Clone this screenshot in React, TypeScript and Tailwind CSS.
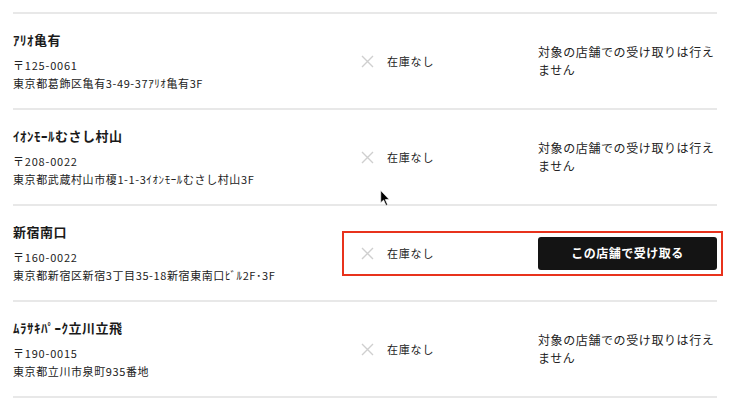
import React from "react";

type Store = {
  name: string;
  zip: string;
  address: string;
  canPickup: boolean;
};

const stores: Store[] = [
  { name: "ｱﾘｵ亀有", zip: "〒125-0061", address: "東京都葛飾区亀有3-49-37ｱﾘｵ亀有3F", canPickup: false },
  { name: "ｲｵﾝﾓｰﾙむさし村山", zip: "〒208-0022", address: "東京都武蔵村山市榎1-1-3ｲｵﾝﾓｰﾙむさし村山3F", canPickup: false },
  { name: "新宿南口", zip: "〒160-0022", address: "東京都新宿区新宿3丁目35-18新宿東南口ﾋﾞﾙ2F･3F", canPickup: true },
  { name: "ﾑﾗｻｷﾊﾟｰｸ立川立飛", zip: "〒190-0015", address: "東京都立川市泉町935番地", canPickup: false },
];

const font = { fontFamily: '"Noto Sans CJK JP", "Noto Sans", sans-serif' };

function Cross() {
  return (
    <svg width="13" height="13" viewBox="0 0 13 13" className="shrink-0">
      <path d="M1 1 L12 12 M12 1 L1 12" stroke="#cfcfcf" strokeWidth="1.4" />
    </svg>
  );
}

function StoreRow({ store }: { store: Store }) {
  return (
    <div className="relative flex items-center border-t-2 border-[#e8e8e8] h-[96px]">
      <div className="flex-1 flex flex-col pt-[14px] pb-[15px]">
        <p className="text-[13px] leading-[20px] font-bold text-[#1a1a1a] tracking-[0.5px]">{store.name}</p>
        <p className="mt-[6px] text-[11px] leading-[18px] text-[#222] tracking-[0.8px]">{store.zip}</p>
        <p className="text-[11px] leading-[18px] text-[#222] tracking-[0.6px]">{store.address}</p>
      </div>
      <div className="w-[196px] flex items-center pl-[19px] gap-[13px]">
        <Cross />
        <span className="text-[11px] text-[#222] tracking-[0.8px]">在庫なし</span>
      </div>
      <div className="w-[179px]">
        {store.canPickup ? (
          <button className="w-full h-[33px] rounded-[3px] bg-[#141414] text-white text-[12px] font-bold tracking-[0.5px]">
            この店舗で受け取る
          </button>
        ) : (
          <p className="text-[12px] leading-[18px] text-[#222] tracking-[0.6px]">
            対象の店舗での受け取りは行えません
          </p>
        )}
      </div>
      {store.canPickup && (
        <div className="absolute left-[329px] right-[-6px] top-[25px] h-[45px] border-2 border-[#e8321c] pointer-events-none" />
      )}
    </div>
  );
}

export default function App() {
  return (
    <div className="relative w-[730px] h-[410px] bg-white overflow-hidden" style={font}>
      <div className="pl-[13px] pr-[13px] pt-[12px]">
        {stores.map((s) => (
          <StoreRow key={s.name} store={s} />
        ))}
        <div className="border-t-2 border-[#e8e8e8]" />
      </div>
      <svg className="absolute left-[380px] top-[190px]" width="11" height="17" viewBox="0 0 10 16">
        <path d="M0.5 0.5 L0.5 12 L3.2 9.5 L5.5 14.5 L7 13.8 L4.8 9 L8.5 9 Z" fill="#000" stroke="#fff" strokeWidth="0.6" />
      </svg>
    </div>
  );
}
